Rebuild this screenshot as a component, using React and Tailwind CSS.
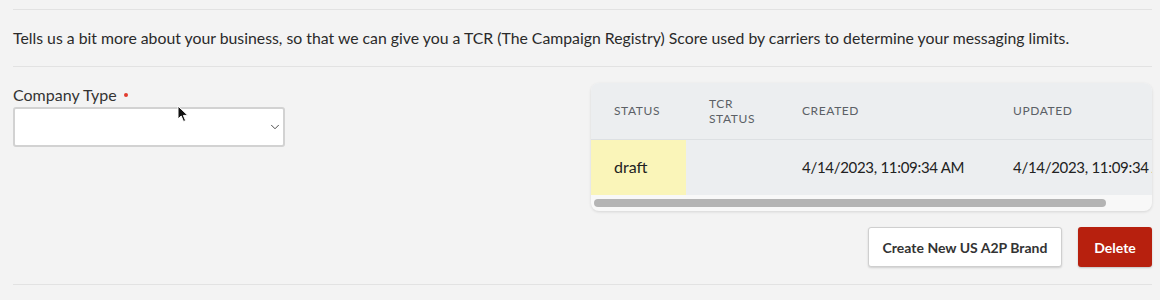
import { ChevronDown } from "lucide-react";

const font = { fontFamily: "Lato, 'Liberation Sans', sans-serif" };

function HeaderCell({ children, className = "" }) {
  return (
    <th className={"px-[23px] text-left align-middle text-[12px] font-normal leading-[15px] tracking-[0.6px] text-[#5b6066] uppercase " + className}>
      {children}
    </th>
  );
}

export default function App() {
  return (
    <div style={font} className="relative min-h-[300px] bg-[#f3f3f3] pl-[13px] pr-[8px] pt-[9px] text-[#2a2a2a]">
      <div className="border-t border-[#e2e2e2]">
        <p className="py-[18px] text-[15.8px] leading-[20px]">
          Tells us a bit more about your business, so that we can give you a TCR (The Campaign Registry) Score used by carriers to determine your messaging limits.
        </p>
      </div>

      <div className="flex justify-between border-t border-b border-[#e2e2e2] pb-[17px]">
        <div className="pt-[18px]">
          <label className="flex items-center text-[16px] leading-[20px] text-[#333]">
            Company Type
            <span className="ml-[7px] inline-block h-[4px] w-[4px] rounded-full bg-[#e23b2e]" />
          </label>
          <div className="mt-[2px] flex h-[40px] w-[272px] items-center justify-end rounded-[3px] border-2 border-[#d2d2d2] bg-white pr-[1px]">
            <ChevronDown className="h-[14px] w-[14px] text-[#333]" strokeWidth={1.5} />
          </div>
        </div>

        <div className="flex w-[561px] flex-col items-end pt-[16px]">
          <div className="w-full overflow-hidden rounded-[8px] bg-[#f8f8f8] shadow-[0_1px_3px_rgba(0,0,0,0.12)]">
            <div className="overflow-hidden">
              <table className="w-[720px] table-fixed border-collapse">
                <colgroup>
                  <col className="w-[95px]" />
                  <col className="w-[93px]" />
                  <col className="w-[211px]" />
                  <col className="w-[321px]" />
                </colgroup>
                <thead>
                  <tr className="h-[56px] border-b border-[#dde0e3] bg-[#eceef0]">
                    <HeaderCell>Status</HeaderCell>
                    <HeaderCell>TCR Status</HeaderCell>
                    <HeaderCell>Created</HeaderCell>
                    <HeaderCell>Updated</HeaderCell>
                  </tr>
                </thead>
                <tbody>
                  <tr className="h-[56px] bg-[#eceef0] text-[16px] text-[#222]">
                    <td className="bg-[#faf5b9] px-[23px]">draft</td>
                    <td className="px-[23px]"></td>
                    <td className="whitespace-nowrap px-[23px] text-[15px] tracking-[-0.3px]">4/14/2023, 11:09:34 AM</td>
                    <td className="whitespace-nowrap px-[23px] text-[15px] tracking-[-0.3px]">4/14/2023, 11:09:34 AM</td>
                  </tr>
                </tbody>
              </table>
            </div>
            <div className="flex h-[16px] items-center px-[3px]">
              <div className="h-[8px] w-[512px] rounded-full bg-[#b4b4b4]" />
            </div>
          </div>

          <div className="mt-[16px] flex gap-[16px]">
            <button className="h-[40px] w-[194px] rounded-[3px] border border-[#cfcfcf] bg-white text-[14px] font-bold text-[#333] shadow-[0_1px_2px_rgba(0,0,0,0.15)]">
              Create New US A2P Brand
            </button>
            <button className="h-[40px] w-[74px] rounded-[3px] bg-[#b7200e] text-[14px] font-bold text-white shadow-[0_1px_2px_rgba(0,0,0,0.2)]">
              Delete
            </button>
          </div>
        </div>
      </div>

      <svg className="absolute left-[177px] top-[105px]" width="12" height="18" viewBox="0 0 12 18">
        <path d="M1 1 L1 14 L4.2 11 L6.5 16.5 L8.6 15.6 L6.4 10.4 L10.8 10.4 Z" fill="#111" stroke="#fff" strokeWidth="1" strokeLinejoin="round" />
      </svg>
    </div>
  );
}
